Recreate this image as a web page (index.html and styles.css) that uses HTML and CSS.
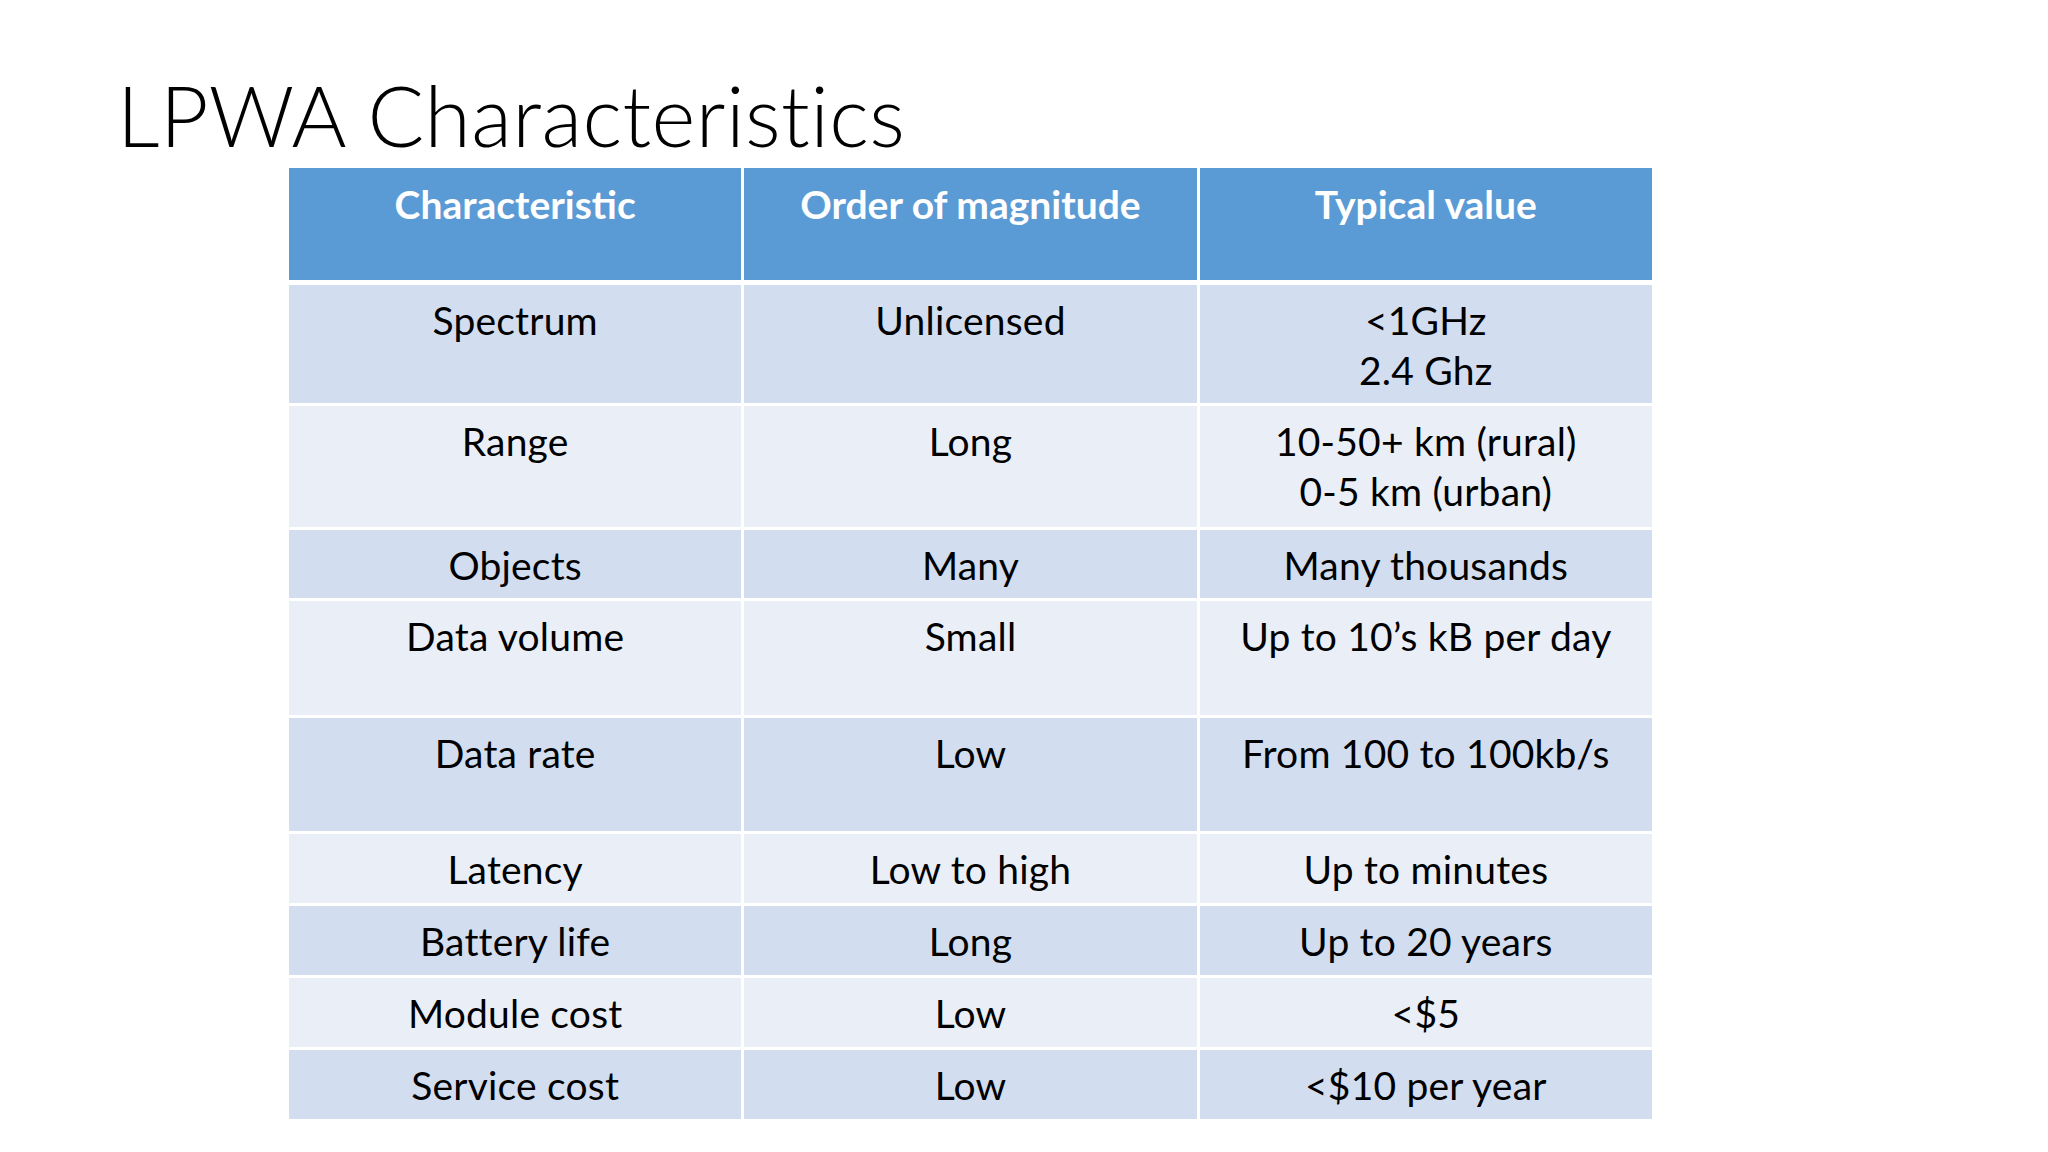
FILE: index.html
```html
<!DOCTYPE html>
<html lang="en">
<head>
<meta charset="utf-8">
<title>LPWA Characteristics</title>
<link rel="stylesheet" href="styles.css">
</head>
<body>
<main class="slide">
  <h1 class="title">LPWA Characteristics</h1>
  <section class="table" role="table">
    <div class="head" role="row">
      <div class="th" role="columnheader">Characteristic</div>
      <div class="th" role="columnheader">Order of magnitude</div>
      <div class="th" role="columnheader">Typical value</div>
    </div>
    <div class="body">
      <div class="td odd">Spectrum</div><div class="td odd">Unlicensed</div><div class="td odd">&lt;1GHz<br>2.4 Ghz</div>
      <div class="td even">Range</div><div class="td even">Long</div><div class="td even">10-50+ km (rural)<br>0-5 km (urban)</div>
      <div class="td odd">Objects</div><div class="td odd">Many</div><div class="td odd">Many thousands</div>
      <div class="td even">Data volume</div><div class="td even">Small</div><div class="td even">Up to 10’s kB per day</div>
      <div class="td odd">Data rate</div><div class="td odd">Low</div><div class="td odd">From 100 to 100kb/s</div>
      <div class="td even">Latency</div><div class="td even">Low to high</div><div class="td even">Up to minutes</div>
      <div class="td odd">Battery life</div><div class="td odd">Long</div><div class="td odd">Up to 20 years</div>
      <div class="td even">Module cost</div><div class="td even">Low</div><div class="td even">&lt;$5</div>
      <div class="td odd">Service cost</div><div class="td odd">Low</div><div class="td odd">&lt;$10 per year</div>
    </div>
  </section>
</main>
</body>
</html>
```
FILE: styles.css
```css
html, body {
  margin: 0;
  padding: 0;
  background: #ffffff;
}

.slide {
  width: 2048px;
  height: 1152px;
  box-sizing: border-box;
  padding-top: 73px;
  background: #ffffff;
  font-family: "Lato", "Open Sans", "Liberation Sans", sans-serif;
  color: #000000;
  overflow: hidden;
}

.title {
  margin: 0 0 11px 0;
  padding-left: 117px;
  font-size: 84px;
  line-height: 84px;
  font-weight: 300;
  letter-spacing: 0.4px;
  color: #000000;
}

.table {
  width: 1363px;
  margin-left: 289px;
}

.head,
.body {
  display: grid;
  grid-template-columns: 1fr 1fr 1fr;
  column-gap: 3px;
}

.head {
  grid-template-rows: 112px;
  margin-bottom: 5px;
}

.body {
  row-gap: 3px;
  grid-template-rows: 118px 121px 68px 114px 113px 69px 69px 69px 69px;
}

.th,
.td {
  box-sizing: border-box;
  text-align: center;
  font-size: 39px;
  line-height: 50px;
}

.th {
  background: #5b9bd5;
  color: #ffffff;
  font-weight: 700;
  padding-top: 11px;
}

.td {
  padding-top: 10px;
  font-weight: 400;
  letter-spacing: 0.2px;
}

.odd {
  background: #d2deef;
}

.even {
  background: #eaeff7;
}
```
